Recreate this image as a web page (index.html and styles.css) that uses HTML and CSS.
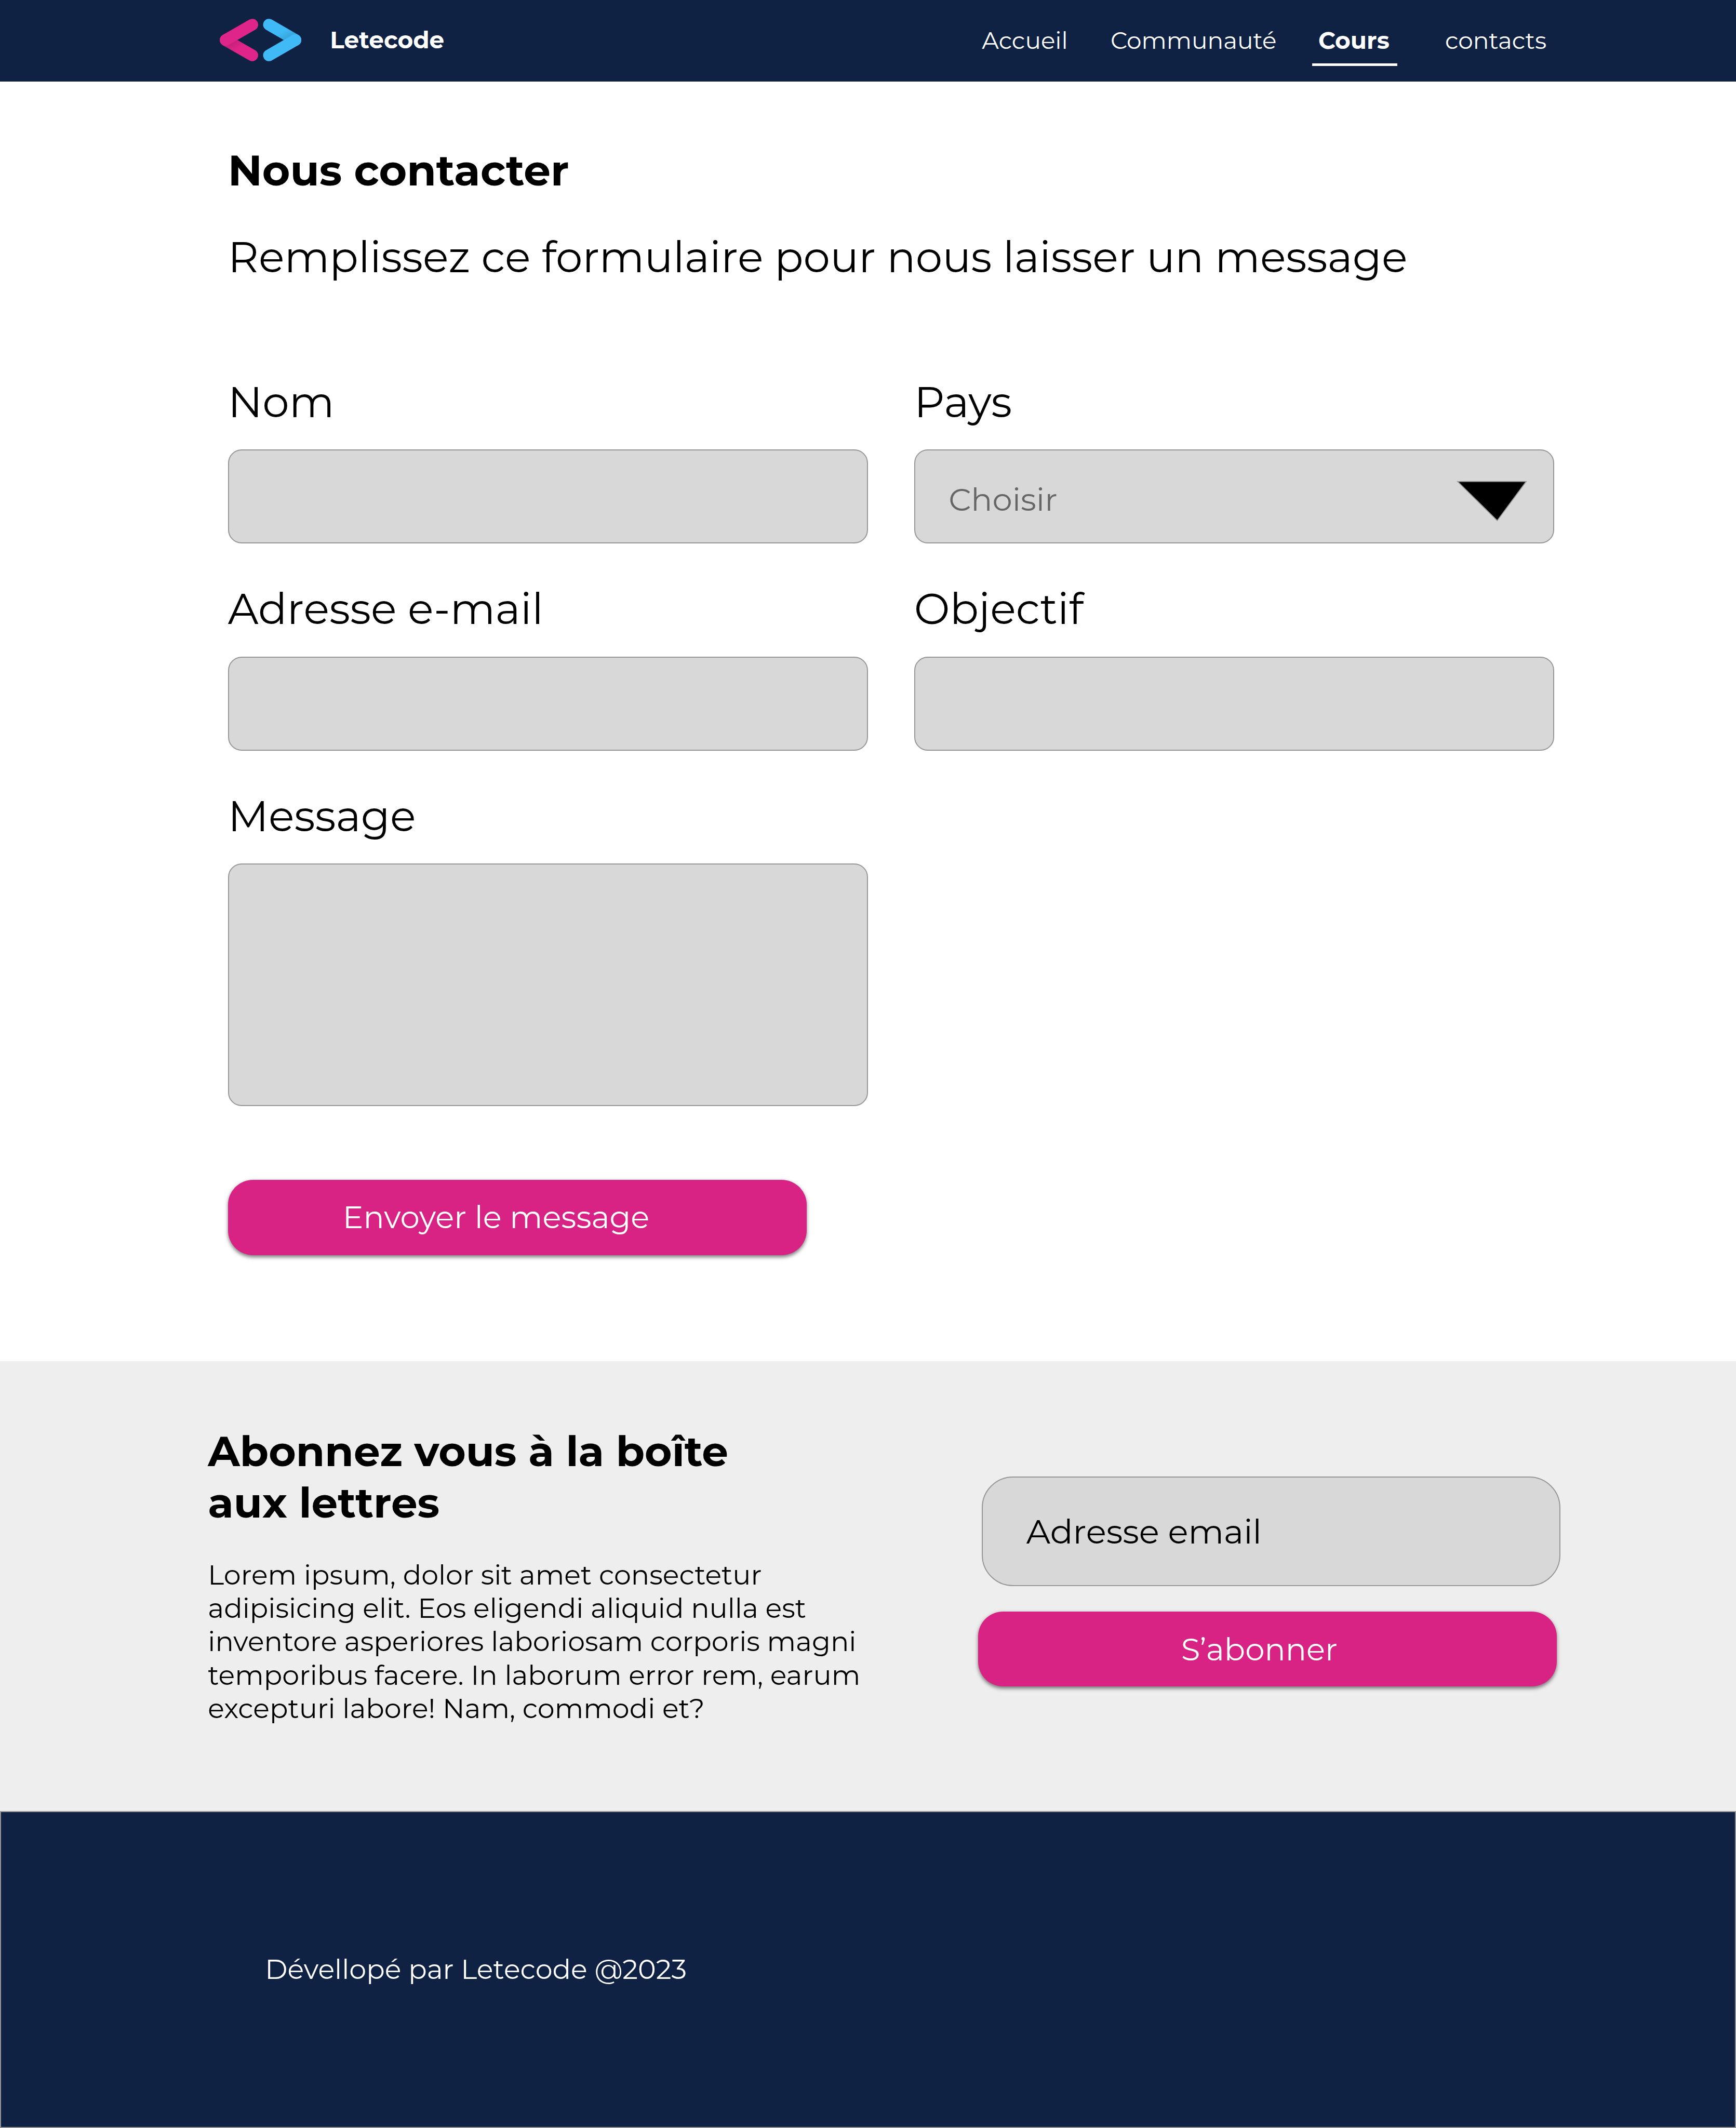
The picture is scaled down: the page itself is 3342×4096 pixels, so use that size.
FILE: index.html
```html
<!DOCTYPE html>
<html lang="fr">
<head>
  <meta charset="utf-8">
  <title>Letecode – Nous contacter</title>
  <link rel="stylesheet" href="styles.css">
</head>
<body>
  <header class="header">
    <a class="brand">
      <svg class="brand-logo" viewBox="0 0 181 94" fill="none" stroke-width="26" stroke-linecap="round">
        <defs>
          <linearGradient id="pink-fold" gradientUnits="userSpaceOnUse" x1="19.6" y1="58.6" x2="28.6" y2="74">
            <stop offset="0" stop-color="#c9217c"/>
            <stop offset="1" stop-color="#df2589"/>
          </linearGradient>
          <linearGradient id="blue-fold" gradientUnits="userSpaceOnUse" x1="161" y1="36" x2="152" y2="20.4">
            <stop offset="0" stop-color="#38a7dc"/>
            <stop offset="1" stop-color="#3fbaf6"/>
          </linearGradient>
        </defs>
        <path d="M13.1 47.2L72 81" stroke="url(#pink-fold)"/>
        <path d="M72 13.2L13.1 47.2" stroke="#df2589"/>
        <path d="M109 13.2L167.5 47.2" stroke="url(#blue-fold)"/>
        <path d="M167.5 47.2L109 81" stroke="#3fbaf6"/>
      </svg>
      <span class="brand-name">Letecode</span>
    </a>
    <nav class="nav">
      <a>Accueil</a>
      <a>Communauté</a>
      <a class="nav-current">Cours</a>
      <a>contacts</a>
    </nav>
  </header>

  <main class="contact">
    <h1 class="title">Nous contacter</h1>
    <p class="lead">Remplissez ce formulaire pour nous laisser un message</p>
    <form class="form">
      <div class="field">
        <label for="nom">Nom</label>
        <input class="control" id="nom">
      </div>
      <div class="field">
        <label>Pays</label>
        <div class="control select">
          <span>Choisir</span>
          <svg class="arrow" viewBox="0 0 156 89"><path d="M2.4 1H154L90 87.3Z" fill="#000" stroke="#979797" stroke-width="2"/></svg>
        </div>
      </div>
      <div class="field">
        <label for="mail">Adresse e-mail</label>
        <input class="control" id="mail">
      </div>
      <div class="field">
        <label for="objectif">Objectif</label>
        <input class="control" id="objectif">
      </div>
      <div class="field">
        <label for="message">Message</label>
        <textarea class="control control-tall" id="message"></textarea>
      </div>
    </form>
    <button class="button button-send">Envoyer le message</button>
  </main>

  <section class="newsletter">
    <div class="newsletter-text">
      <h2>Abonnez vous à la boîte<br>aux lettres</h2>
      <p>Lorem ipsum, dolor sit amet consectetur<br>adipisicing elit. Eos eligendi aliquid nulla est<br>inventore asperiores laboriosam corporis magni<br>temporibus facere. In laborum error rem, earum<br>excepturi labore! Nam, commodi et?</p>
    </div>
    <div class="newsletter-form">
      <div class="email">Adresse email</div>
      <button class="button button-subscribe">S’abonner</button>
    </div>
  </section>

  <footer class="footer">Dévellopé par Letecode @2023</footer>
</body>
</html>
```
FILE: styles.css
```css
/* 1rem = 10 design units on a 3840-unit wide artboard */
html {
  font-size: 8.703125px;
}

*,
*::before,
*::after {
  box-sizing: border-box;
}

body {
  margin: 0;
  width: 384rem;
  background: #fff;
  color: #000;
  font-family: Montserrat, Inter, sans-serif;
}

h1, h2, p {
  margin: 0;
}

/* Header */
.header {
  display: flex;
  align-items: flex-start;
  height: 18rem;
  padding-left: 48.6rem;
  background: #102243;
  color: #fff;
  font-size: 5.22rem;
  line-height: 6.4rem;
}

.brand {
  display: flex;
  align-items: flex-start;
  width: 168.6rem;
}

.brand-logo {
  width: 18.1rem;
  height: 9.4rem;
  margin-top: 4.17rem;
}

.brand-name {
  margin: 5.63rem 0 0 6.3rem;
  font-weight: 700;
}

.nav {
  display: grid;
  grid-template-columns: 28.45rem 45.98rem 28.03rem auto;
  padding-top: 5.73rem;
}

.nav-current {
  position: relative;
  font-weight: 700;
}

.nav-current::after {
  content: "";
  position: absolute;
  left: -1.4rem;
  top: 8.27rem;
  width: 18.85rem;
  height: 0.6rem;
  background: #fff;
}

/* Contact form */
.contact {
  height: 283rem;
  padding: 14.06rem 0 0 50.4rem;
  font-size: 9.42rem;
  line-height: 11.4rem;
}

.title {
  font-size: inherit;
  font-weight: 700;
}

.lead {
  margin-top: 7.8rem;
}

.form {
  display: grid;
  grid-template-columns: 141.6rem 141.6rem;
  gap: 8.86rem 10.2rem;
  margin-top: 20.6rem;
}

.field {
  display: flex;
  flex-direction: column;
  gap: 4.74rem;
}

.control {
  display: block;
  width: 100%;
  height: 20.8rem;
  margin: 0;
  border: 2px solid #979797;
  border-radius: 3rem;
  background: #d8d8d8;
  font: inherit;
  resize: none;
}

.control-tall {
  height: 53.6rem;
}

.select {
  display: flex;
  align-items: flex-start;
  justify-content: space-between;
  padding: 6.55rem 5.8rem 0 7.4rem;
  color: #666;
  font-size: 7rem;
  line-height: 8.6rem;
}

.arrow {
  width: 15.6rem;
  height: 8.9rem;
  margin-top: 0.25rem;
}

/* Buttons */
.button {
  display: block;
  width: 128rem;
  height: 16.6rem;
  border: 0;
  border-radius: 5.5rem;
  background: #d82384;
  box-shadow: 0 0.4rem 0.8rem rgba(0, 0, 0, 0.5);
  color: #fff;
  font: 6.84rem/8.4rem Montserrat, Inter, sans-serif;
  text-align: left;
}

.button-send {
  margin-top: 16.4rem;
  padding: 3.1rem 0 3.4rem 25.4rem;
}

.button-subscribe {
  padding: 4.2rem 0 4rem 44.85rem;
}

/* Newsletter */
.newsletter {
  display: grid;
  grid-template-columns: 170.4rem auto;
  justify-content: start;
  height: 99.6rem;
  padding-left: 46rem;
  background: #eee;
}

.newsletter-text {
  padding-top: 14.25rem;
}

.newsletter h2 {
  font-size: 9.22rem;
  line-height: 11.4rem;
}

.newsletter p {
  margin-top: 6.5rem;
  font-size: 6.02rem;
  line-height: 7.4rem;
}

.newsletter-form {
  padding-top: 25.6rem;
}

.email {
  width: 128rem;
  height: 24.15rem;
  margin: 0 0 5.65rem 0.8rem;
  padding: 7.44rem 0 0 9.6rem;
  border: 2px solid #979797;
  border-radius: 6.9rem;
  background: #d8d8d8;
  font-size: 7.42rem;
  line-height: 9rem;
}

/* Footer */
.footer {
  height: 70rem;
  padding: 30.94rem 0 0 58.4rem;
  border: 2px solid #979797;
  background: #102243;
  color: #fff;
  font-size: 6.03rem;
  line-height: 7.4rem;
}
```
